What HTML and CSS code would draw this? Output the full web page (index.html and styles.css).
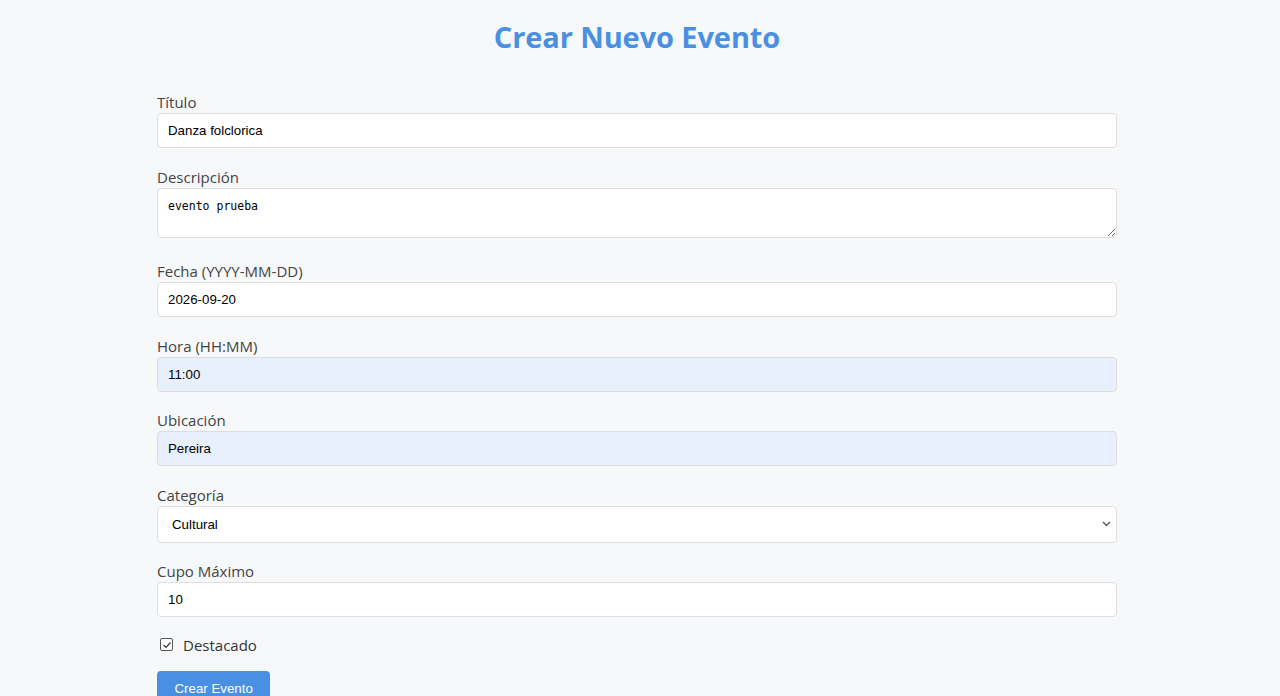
FILE: index.html
```html
<!DOCTYPE html>
<html lang="es">
<head>
<meta charset="utf-8">
<title>Crear Nuevo Evento</title>
<link rel="stylesheet" href="styles.css">
</head>
<body>
<div class="page">
  <h1 class="title">Crear Nuevo Evento</h1>
  <form class="form">
    <div class="group">
      <label class="label">Título</label>
      <input class="field" type="text" value="Danza folclorica">
    </div>
    <div class="group">
      <label class="label">Descripción</label>
      <textarea class="field area">evento prueba</textarea>
    </div>
    <div class="group">
      <label class="label">Fecha (YYYY-MM-DD)</label>
      <input class="field" type="text" value="2026-09-20">
    </div>
    <div class="group">
      <label class="label">Hora (HH:MM)</label>
      <input class="field autofill" type="text" value="11:00">
    </div>
    <div class="group">
      <label class="label">Ubicación</label>
      <input class="field autofill" type="text" value="Pereira">
    </div>
    <div class="group">
      <label class="label">Categoría</label>
      <div class="select">
        <span>Cultural</span>
        <svg class="chev" width="9" height="6" viewBox="0 0 9 6"><path d="M1 1l3.5 3.5L8 1" fill="none" stroke="#555" stroke-width="1.4"/></svg>
      </div>
    </div>
    <div class="group">
      <label class="label">Cupo Máximo</label>
      <input class="field" type="text" value="10">
    </div>
    <div class="check">
      <span class="box"><svg width="10" height="10" viewBox="0 0 10 10"><path d="M1.5 5l2.5 2.5 4.5-5" fill="none" stroke="#333" stroke-width="1.2"/></svg></span>
      <span class="check-label">Destacado</span>
    </div>
    <button class="btn" type="button">Crear Evento</button>
  </form>
</div>
</body>
</html>
```
FILE: styles.css
```css
html, body {
  margin: 0;
  padding: 0;
  background: #f7f8fa;
}
body {
  padding-right: 6px;
  font-family: "Open Sans", "Noto Sans", sans-serif;
  color: #333;
}
.page {
  width: 960px;
  margin: 0 auto;
}
.title {
  margin: 0;
  padding-top: 16px;
  text-align: center;
  font-size: 29px;
  font-weight: 700;
  color: #4a90e2;
  line-height: 42px;
  letter-spacing: -0.1px;
}
.form {
  margin-top: 34px;
}
.group {
  display: flex;
  flex-direction: column;
  margin-bottom: 18.5px;
}
.label {
  display: block;
  font-size: 15px;
  line-height: 20px;
  color: #444;
  margin-bottom: 1px;
}
.field {
  display: block;
  box-sizing: border-box;
  width: 100%;
  height: 35px;
  padding: 8px 10px;
  border: 1px solid #dddddd;
  border-radius: 4px;
  background: #fff;
  font-family: "Liberation Sans", Arial, sans-serif;
  font-size: 13.3px;
  color: #000;
  outline: none;
}
.autofill {
  background: #e8f0fe;
}
.area {
  height: 50px;
  font-family: "DejaVu Sans Mono", "Liberation Mono", monospace;
  font-size: 11.5px;
  padding: 10px 10px;
  resize: vertical;
  margin-bottom: 5px;
}
.select {
  box-sizing: border-box;
  height: 37px;
  display: flex;
  align-items: center;
  justify-content: space-between;
  padding: 0 5px 0 14px;
  border: 1px solid #dddddd;
  border-radius: 4px;
  background: #fff;
  font-family: "Liberation Sans", Arial, sans-serif;
  font-size: 13.3px;
  color: #000;
}
.check {
  display: flex;
  align-items: center;
  gap: 10px;
  margin: -1px 0 16px 3px;
}
.box {
  box-sizing: border-box;
  width: 13px;
  height: 13px;
  border: 1px solid #555;
  border-radius: 2px;
  display: flex;
  align-items: center;
  justify-content: center;
  background: #fff;
}
.box svg {
  display: block;
}
.check-label {
  font-size: 15px;
  line-height: 20px;
  color: #333;
}
.btn {
  display: block;
  background: #4a90e2;
  color: #fff;
  border: none;
  border-radius: 4px;
  padding: 0 17.5px;
  height: 36px;
  white-space: nowrap;
  font-family: "Liberation Sans", Arial, sans-serif;
  font-size: 13.3px;
}
```
